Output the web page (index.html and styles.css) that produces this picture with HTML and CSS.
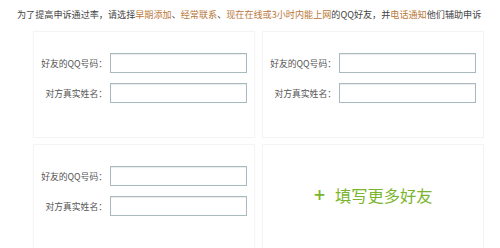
FILE: index.html
```html
<!DOCTYPE html>
<html lang="zh-CN">
<head>
<meta charset="utf-8">
<title>填写好友</title>
<link rel="stylesheet" href="styles.css">
</head>
<body>
<p class="intro">为了提高申诉通过率，请选择<span class="hl">早期添加</span>、<span class="hl">经常联系</span>、<span class="hl">现在在线或3小时内能上网</span>的QQ好友，并<span class="hl">电话通知</span>他们辅助申诉</p>
<div class="grid">
  <div class="card">
    <div class="row"><label class="lbl">好友的QQ号码：</label><input class="field" type="text"></div>
    <div class="row"><label class="lbl">对方真实姓名：</label><input class="field" type="text"></div>
  </div>
  <div class="card">
    <div class="row"><label class="lbl">好友的QQ号码：</label><input class="field" type="text"></div>
    <div class="row"><label class="lbl">对方真实姓名：</label><input class="field" type="text"></div>
  </div>
  <div class="card">
    <div class="row"><label class="lbl">好友的QQ号码：</label><input class="field" type="text"></div>
    <div class="row"><label class="lbl">对方真实姓名：</label><input class="field" type="text"></div>
  </div>
  <div class="card add">
    <span class="plus">+</span><span class="addtext">填写更多好友</span>
  </div>
</div>
</body>
</html>
```
FILE: styles.css
```css
html, body {
  margin: 0;
  padding: 0;
  background: #ffffff;
}
body {
  width: 500px;
  height: 248px;
  overflow: hidden;
  font-family: "Noto Sans CJK SC", "Noto Sans", sans-serif;
  color: #444;
}
.intro {
  margin: 0;
  padding: 8px 0 0 17px;
  height: 23px;
  font-size: 9.1px;
  line-height: 12px;
  white-space: nowrap;
  color: #444;
}
.hl {
  color: #b9773a;
}
.grid {
  margin-left: 33px;
  width: 451px;
  display: grid;
  grid-template-columns: 222px 222px;
  column-gap: 7px;
  row-gap: 6px;
}
.card {
  box-sizing: border-box;
  height: 107px;
  border: 1px solid #f4f4f4;
  box-shadow: 0 0 1px rgba(0,0,0,0.03);
  padding-top: 21px;
  display: flex;
  flex-direction: column;
  gap: 10px;
}
.row {
  display: flex;
  align-items: center;
  height: 20px;
}
.lbl {
  width: 73px;
  text-align: right;
  font-size: 8.8px;
  color: #555;
  margin-right: 3px;
  white-space: nowrap;
}
.field {
  box-sizing: border-box;
  width: 137px;
  height: 20px;
  margin: 0;
  padding: 0 3px;
  border: 1px solid #a9babf;
  box-shadow: inset 0 1px 1px rgba(0,0,0,0.08);
  background: #fff;
}
.add {
  flex-direction: row;
  align-items: center;
  justify-content: center;
  padding-top: 0;
  padding-bottom: 6px;
  gap: 0;
  color: #7ab52d;
}
.plus {
  font-size: 15px;
  font-weight: bold;
  margin-right: 9px;
  font-family: "DejaVu Sans", sans-serif;
}
.addtext {
  font-size: 16.3px;
  font-weight: 400;
}
```
